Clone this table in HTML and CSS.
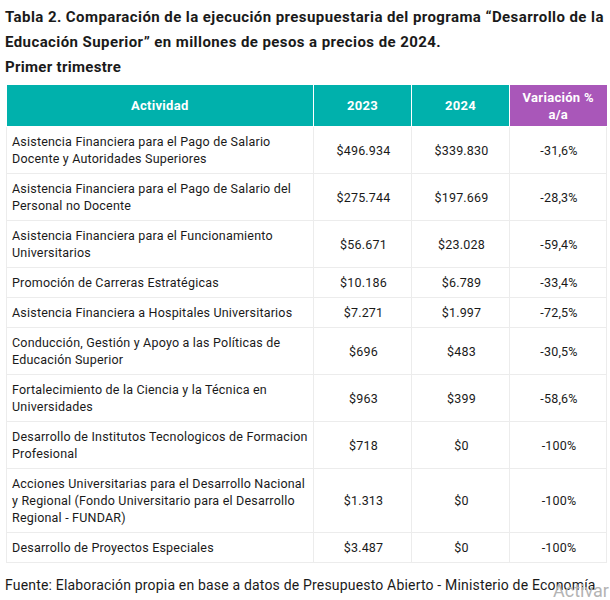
FILE: index.html
```html
<!DOCTYPE html>
<html lang="es">
<head>
<meta charset="utf-8">
<link rel="stylesheet" href="styles.css">
</head>
<body>
<div class="page">
  <h1 class="title">Tabla 2. Comparación de la ejecución presupuestaria del programa “Desarrollo de la Educación Superior” en millones de pesos a precios de 2024.</h1>
  <h2 class="subtitle">Primer trimestre</h2>
  <table class="data">
    <colgroup>
      <col class="c-act"><col class="c-num"><col class="c-num"><col class="c-var">
    </colgroup>
    <thead>
      <tr>
        <th class="h-teal">Actividad</th>
        <th class="h-teal">2023</th>
        <th class="h-teal">2024</th>
        <th class="h-purple">Variación %<br>a/a</th>
      </tr>
    </thead>
    <tbody>
      <tr><td class="act">Asistencia Financiera para el Pago de Salario Docente y Autoridades Superiores</td><td>$496.934</td><td>$339.830</td><td>-31,6%</td></tr>
      <tr><td class="act">Asistencia Financiera para el Pago de Salario del Personal no Docente</td><td>$275.744</td><td>$197.669</td><td>-28,3%</td></tr>
      <tr><td class="act">Asistencia Financiera para el Funcionamiento Universitarios</td><td>$56.671</td><td>$23.028</td><td>-59,4%</td></tr>
      <tr><td class="act">Promoción de Carreras Estratégicas</td><td>$10.186</td><td>$6.789</td><td>-33,4%</td></tr>
      <tr><td class="act">Asistencia Financiera a Hospitales Universitarios</td><td>$7.271</td><td>$1.997</td><td>-72,5%</td></tr>
      <tr><td class="act">Conducción, Gestión y Apoyo a las Políticas de Educación Superior</td><td>$696</td><td>$483</td><td>-30,5%</td></tr>
      <tr><td class="act">Fortalecimiento de la Ciencia y la Técnica en Universidades</td><td>$963</td><td>$399</td><td>-58,6%</td></tr>
      <tr><td class="act">Desarrollo de Institutos Tecnologicos de Formacion Profesional</td><td>$718</td><td>$0</td><td>-100%</td></tr>
      <tr><td class="act">Acciones Universitarias para el Desarrollo Nacional y Regional (Fondo Universitario para el Desarrollo Regional - FUNDAR)</td><td>$1.313</td><td>$0</td><td>-100%</td></tr>
      <tr><td class="act">Desarrollo de Proyectos Especiales</td><td>$3.487</td><td>$0</td><td>-100%</td></tr>
    </tbody>
  </table>
  <p class="source">Fuente: Elaboración propia en base a datos de Presupuesto Abierto - Ministerio de Economía</p>
  <span class="watermark">Activar</span>
</div>
</body>
</html>
```
FILE: styles.css
```css
html, body {
  margin: 0;
  padding: 0;
  background: #ffffff;
}
body {
  font-family: Roboto, "Liberation Sans", sans-serif;
  color: #1c1c1c;
  overflow: hidden;
}
.page {
  position: relative;
  width: 610px;
  height: 600px;
  padding: 5px 4px 0 5px;
  box-sizing: border-box;
  overflow: hidden;
}
.title {
  margin: 0;
  font-size: 15px;
  font-weight: 700;
  line-height: 25px;
  letter-spacing: 0.42px;
  color: #1a1a1a;
}
.subtitle {
  margin: 0;
  font-size: 15px;
  font-weight: 700;
  line-height: 25px;
  letter-spacing: 0.3px;
  color: #1a1a1a;
}
.data {
  margin-top: 5px;
  margin-left: 1px;
  width: 600px;
  border-collapse: collapse;
  table-layout: fixed;
  font-size: 12.5px;
  letter-spacing: 0.2px;
}
.c-act { width: 307px; }
.c-num { width: 98px; }
.c-var { width: 97px; }
.data th {
  height: 41px;
  padding: 0 4px;
  color: #ffffff;
  font-size: 13px;
  font-weight: 700;
  line-height: 17px;
  letter-spacing: 0.3px;
  text-align: center;
  border: 1px solid #ffffff;
  border-top: none;
}
.data th:first-child { border-left: none; }
.data th:last-child { border-right: none; }
.h-teal { background: #00b1ac; }
.h-purple { background: #a957b9; }
.data td {
  padding: 6px 3px 6px 5px;
  line-height: 17px;
  text-align: center;
  border: 1px solid #ececec;
  color: #1a1a1a;
}
.data td.act {
  text-align: left;
}
.source {
  margin: 13px 0 0;
  font-size: 14px;
  line-height: 18px;
  letter-spacing: 0.18px;
  color: #1a1a1a;
}
.watermark {
  position: absolute;
  left: 553px;
  top: 581px;
  font-size: 18px;
  line-height: 20px;
  color: #b4b4b4;
  white-space: nowrap;
}
```
